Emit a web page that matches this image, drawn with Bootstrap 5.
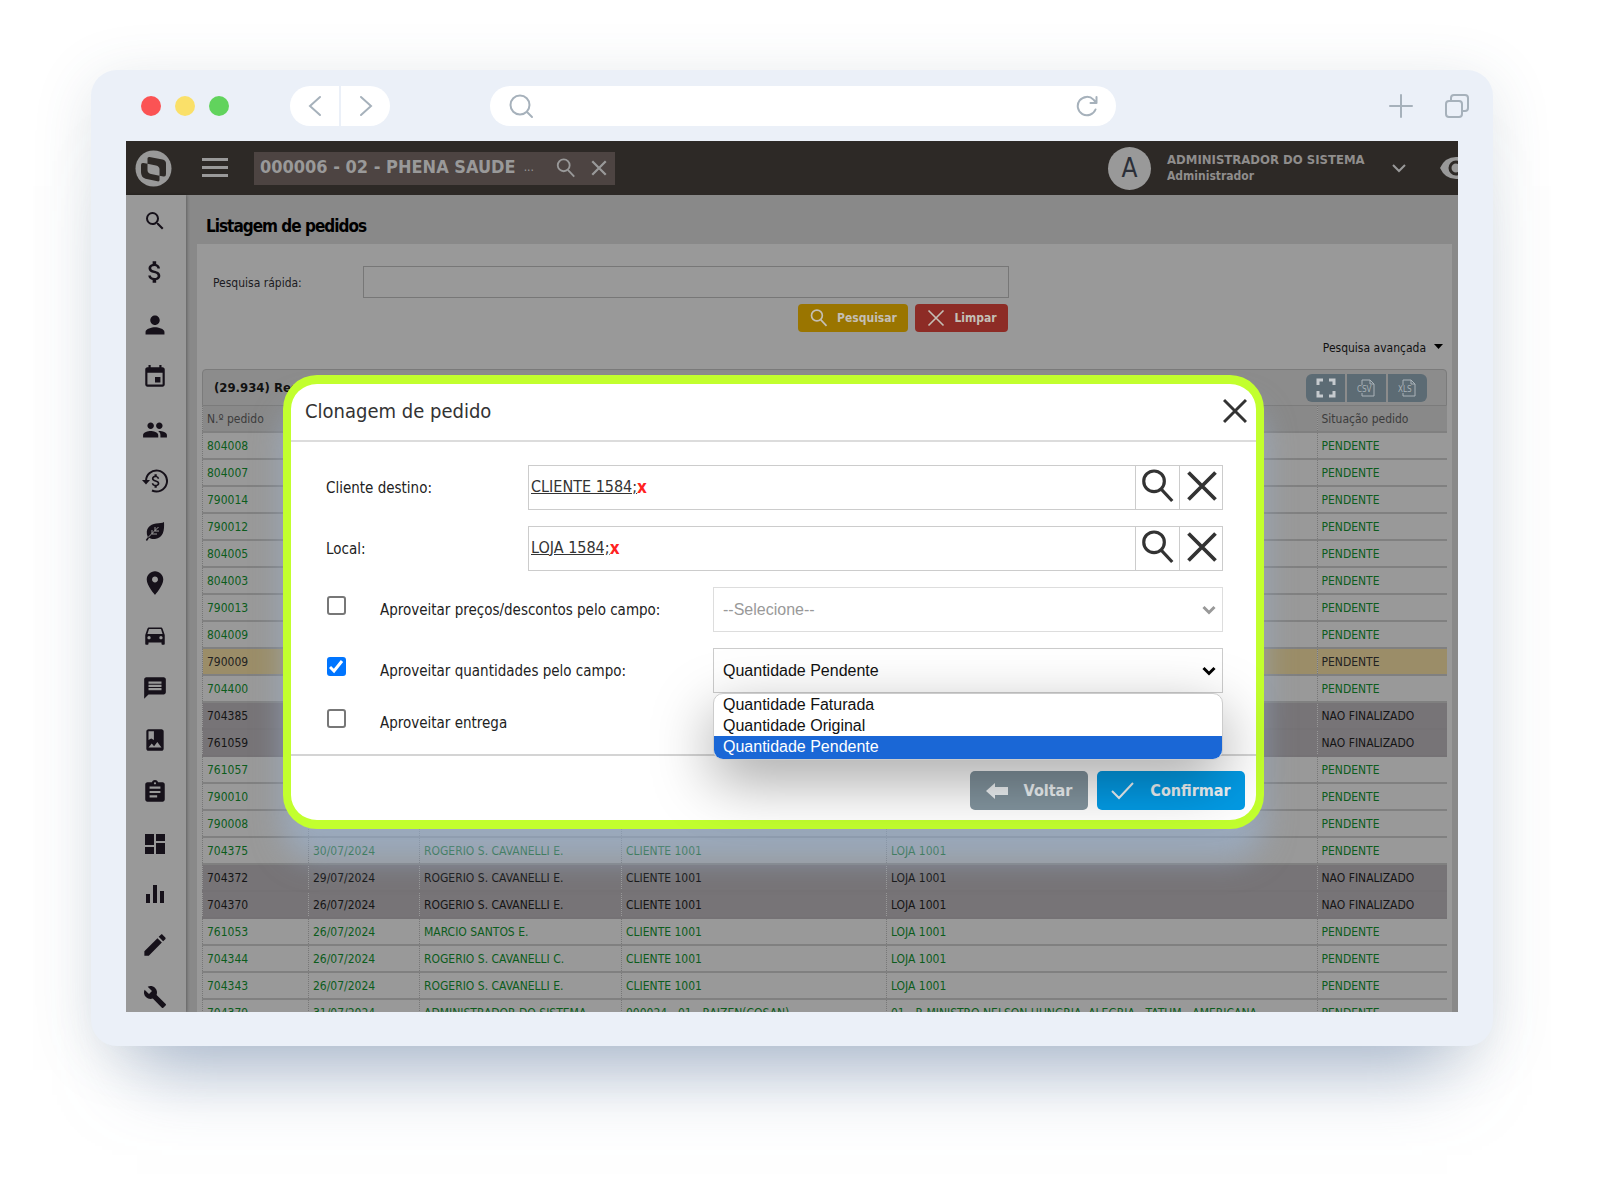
<!DOCTYPE html>
<html lang="pt-BR">
<head>
<meta charset="utf-8">
<meta name="viewport" content="width=device-width, initial-scale=1">
<title>Listagem de pedidos</title>
<link href="https://cdn.jsdelivr.net/npm/bootstrap@5.3.0/dist/css/bootstrap.min.css" rel="stylesheet">
<style>
:root{--ui:"DejaVu Sans Condensed","DejaVu Sans",sans-serif;--ink:#16111a;}
body{background:#fff;font-family:var(--ui);font-size:12px;line-height:16px;color:#111;height:100vh;padding:70px 107px 140px 91px;overflow:hidden}
svg{display:block;flex:none}
button{font-family:inherit}
.window{min-height:0;background:#ebf0f8;border-radius:26px;padding-bottom:34px;box-shadow:0 70px 70px -46px rgba(130,152,182,.62),0 10px 60px rgba(60,85,105,.15)}
.chrome{height:71px;padding:0 24px 0 50px;color:#a6b1bb}
.lamps{gap:14px}
.lamp{width:20px;height:20px;border-radius:50%}
.lamp-red{background:#fb5354}
.lamp-yellow{background:#fae069}
.lamp-green{background:#61d35d}
.nav-pill{margin-left:61px;gap:2px}
.nav-pill button{width:49px;height:40px;background:#fff;border:0;color:inherit}
.nav-pill button:first-child{border-radius:20px 0 0 20px}
.nav-pill button:last-child{border-radius:0 20px 20px 0}
.address{height:40px;border-radius:20px;background:#fff;margin:0 273px 0 100px;padding:0 18px}
.address input{border:0;outline:0;background:none}
.chrome-end{gap:32px}
.bare{background:none;border:0;padding:0;color:inherit}
.screen{background:#898989;margin:0 35px}
.topbar{height:54px;background:#2d2926;color:#999;padding-left:9px;overflow:hidden}
.burger{margin-left:30px}
.tenant{background:#4d4442;width:361px;height:33px;padding:0 7px 0 6px;margin-left:26px;gap:13px}
.tenant-label{padding-bottom:3px}
.tenant-name{font-size:18px;line-height:24px;font-weight:700}
.tenant-more{font-size:12px}
.avatar{width:43px;height:43px;border-radius:50%;background:#999;color:#2b2f38;font-size:26px}
.who{width:204px;font-size:13px;font-weight:700;line-height:16px;margin:0 21px 0 16px;color:#8f8d8c;white-space:nowrap}
.who small{font-size:12px;font-weight:700}
.eye{width:18px;overflow:hidden;margin-left:34px}
.work{min-height:0}
.side{width:60px;background:#999;padding:14px 3px 3px 0;color:var(--ink);box-shadow:1px 0 3px rgba(0,0,0,.3);overflow:hidden}
.side svg{fill:currentColor}
.main-area{padding:0 6px 0 11px;min-width:0}
.page-title{font-size:17px;line-height:24px;font-weight:700;letter-spacing:-1px;color:#000;margin:0;padding:19px 0 6px 9px}
.panel{background:#999;padding:22px 5px 0;overflow:hidden}
.quick{padding-left:11px}
.quick label{width:150px;padding-top:2px;color:#1b1b22}
.quick input{width:646px;height:32px;background:#999;border:1px solid #777;border-radius:0}
.tools{width:806px;margin-top:6px;gap:7px}
.tool{height:28px;border-radius:4px;font-size:12px;font-weight:700;color:#c4bfb5;border:0}
.yellow{background:#9a7500;width:110px}
.red{background:#8d2c26;width:93px}
.advanced{padding:8px 4px 0 0;margin-bottom:13px}
.grid-head{height:37px;border:1px solid #7b7b7b;border-radius:4px 4px 0 0;background:#8c8c8c;padding:0 19px 0 11px;font-size:13px}
.export{gap:2px}
.export button{width:39px;height:28px;border:0;background:#5c6b74;color:#aab3b8;padding:0}
.orders{table-layout:fixed;width:100%;margin:0;color:#0c5c1c;white-space:nowrap}
.orders th{font-weight:400;color:#3c3c3c;background:#898989;height:26px}
.orders th,.orders td{padding:0 4px;vertical-align:middle;border-left:1px dotted #777;border-bottom:2px solid #808080;overflow:hidden}
.orders td{height:27px}
.orders .draft td{background:#777477;color:#151515;border-color:#757275}
.orders .picked td{background:#9b8d68;color:#222}
.layer{inset:0;padding:234px 194px 0 157px;pointer-events:none}
.dialog{pointer-events:auto;background:#fff;border:8px solid #c2ff2e;border-top-width:9px;border-bottom-width:9px;border-radius:34px;box-shadow:0 30px 30px 0 rgba(155,180,212,.6);color:#222;font-size:15px;line-height:20px}
.dialog-head{height:58px;border-bottom:2px solid #dcdcdc;padding:0 9px 2px 14px}
.dialog-head h2{font-size:20px;line-height:28px;margin:0;font-weight:400;color:#333}
.fields{padding:23px 33px 18px 35px;gap:16px}
.field-name{width:202px}
.picker{height:45px;border:1px solid #ccc}
.picker .val{border-right:1px solid #ccc;padding:0 0 2px 2px;font-size:16px}
.picker .val a{color:#333;text-decoration:underline}
.picker .val button{color:#f22;font-weight:700;font-size:17px}
.picker>button{width:43px;height:43px;padding:0 0 3px 1px;display:flex;justify-content:center}
.picker>button+button{border-left:1px solid #ccc}
.line{height:45px}
.line-last{height:27px}
.line label{width:333px;flex:none}
.line .form-check-input{width:19px;height:19px;margin:0 34px 8px 1px;border:2px solid #777;border-radius:3px;flex:none}
.line .form-check-input:checked{background-color:#0075ff;border-color:#0075ff;background-size:19px 19px;background-image:url("data:image/svg+xml,%3Csvg xmlns='http://www.w3.org/2000/svg' viewBox='0 0 19 19'%3E%3Cpath d='M3 10l4 4L15 4' fill='none' stroke='%23fff' stroke-width='3'/%3E%3C/svg%3E")}
.line select{font-family:"Liberation Sans",sans-serif;font-size:16px;height:45px;border:1px solid #ccc;border-radius:0;background-color:#fff;color:#111;padding:0 10px 0 9px;background-size:14px 10px;background-position:right 6px center;background-image:url("data:image/svg+xml,%3Csvg xmlns='http://www.w3.org/2000/svg' viewBox='0 0 14 10'%3E%3Cpath d='M1.5 2l5.500 5.500L12.500 2' fill='none' stroke='%23000' stroke-width='3'/%3E%3C/svg%3E")}
.line select:disabled{color:#999;opacity:1;border-color:#ddd;background-color:#fff;background-image:url("data:image/svg+xml,%3Csvg xmlns='http://www.w3.org/2000/svg' viewBox='0 0 14 10'%3E%3Cpath d='M1.5 2l5.500 5.500L12.500 2' fill='none' stroke='%23999' stroke-width='3'/%3E%3C/svg%3E")}
.menu{top:45px;left:0;right:0;z-index:2;list-style:none;margin:0;padding:0;background:#fff;border:1px solid #ccc;border-radius:10px;overflow:hidden;font:16px/21px "Liberation Sans",sans-serif;color:#111;box-shadow:0 20px 60px rgba(0,0,0,.36)}
.menu li{padding:0 9px}
.menu .on{background:#1a67d6;color:#fff;padding-bottom:2px}
.dialog-foot{border-top:2px solid #d4d4d4;padding:15px 11px 9px;gap:9px;height:66px}
.dialog-foot button{height:39px;border:0;border-radius:5px;font-size:16px;font-weight:700;color:#f0f4f6;white-space:nowrap}
.back{background:#82949e;width:118px}
.ok{background:#039be5;width:148px}
</style>
<script src="https://cdn.jsdelivr.net/npm/bootstrap@5.3.0/dist/js/bootstrap.bundle.min.js"></script>
</head>
<body class="d-flex flex-column">
<svg width="0" height="0" class="position-absolute" aria-hidden="true">
  <symbol id="lens" viewBox="0 0 24 24"><circle cx="9.500" cy="9" r="6.500"/><path d="M14 14l7 7.500"/></symbol>
  <symbol id="cross" viewBox="0 0 24 24"><path d="M3 3l18 18M21 3L3 21"/></symbol>
</svg>
<div class="window d-flex flex-column flex-grow-1">
  <div class="chrome d-flex align-items-center flex-shrink-0">
    <div class="lamps d-flex"><span class="lamp lamp-red"></span><span class="lamp lamp-yellow"></span><span class="lamp lamp-green"></span></div>
    <div class="nav-pill d-flex">
      <button type="button" class="d-flex align-items-center justify-content-center" aria-label="Voltar página"><svg width="14" height="22" fill="none" stroke="currentColor" stroke-width="2" stroke-linecap="round"><path d="M12 2L2 11l10 9"/></svg></button>
      <button type="button" class="d-flex align-items-center justify-content-center" aria-label="Avançar página"><svg width="14" height="22" fill="none" stroke="currentColor" stroke-width="2" stroke-linecap="round"><path d="M2 2l10 9-10 9"/></svg></button>
    </div>
    <div class="address d-flex align-items-center flex-grow-1">
      <svg width="26" height="26" fill="none" stroke="currentColor" stroke-width="2" stroke-linecap="round"><circle cx="12" cy="12" r="9.500"/><path d="M19 19l5 5"/></svg>
      <input class="flex-grow-1" type="text" aria-label="Endereço">
      <button type="button" class="bare" aria-label="Recarregar"><svg width="22" height="22" fill="none" stroke="currentColor" stroke-width="2" stroke-linecap="round" stroke-linejoin="round"><path d="M19.500 14.500A9.200 9.200 0 1 1 17.500 4.600L20 7.500M20.500 2v6h-6"/></svg></button>
    </div>
    <div class="chrome-end d-flex">
      <button type="button" class="bare" aria-label="Nova aba"><svg width="24" height="24" stroke="currentColor" stroke-width="2" stroke-linecap="round"><path d="M12 1v22M1 12h22"/></svg></button>
      <button type="button" class="bare" aria-label="Abas"><svg width="24" height="24" fill="none" stroke="currentColor" stroke-width="2"><rect x="1" y="7" width="16" height="16" rx="3"/><path d="M6 7V4a3 3 0 0 1 3-3h11a3 3 0 0 1 3 3v10a3 3 0 0 1-3 3h-3"/></svg></button>
    </div>
  </div>

  <div class="screen d-flex flex-column flex-grow-1 position-relative overflow-hidden">
    <header class="topbar d-flex align-items-center flex-shrink-0">
      <svg width="37" height="37" viewBox="0 0 37 37"><circle cx="18.500" cy="18.500" r="18" fill="#999"/><path d="M6 15q0-2.500 2.500-2l4 .8V8.500q0-1.800 2-1.500l13 2.600q3.500.8 3.500 4V24q0 3-2.500 2.500l-4-.8v4.300q0 1.700-2 1.300l-12-2.600Q6 27.500 6 22z" fill="#2d2926"/><path d="M12.500 13.800l8.500 1.700q3.500.8 3.500 4v6.200l-8.500-1.800q-3.500-.8-3.500-4z" fill="#999"/></svg>
      <button type="button" class="bare burger" aria-label="Menu"><svg width="26" height="20" fill="#999"><path d="M0 0h26v3H0zM0 8h26v3H0zM0 16h26v3H0z"/></svg></button>
      <div class="tenant d-flex align-items-center"><div class="tenant-label me-auto text-nowrap d-flex align-items-center gap-2"><span class="tenant-name">000006 - 02 - PHENA SAUDE</span><span class="tenant-more">...</span></div>
        <svg width="22" height="22" fill="none" stroke="currentColor" stroke-width="2"><use href="#lens"/></svg>
        <svg width="18" height="18" stroke="currentColor" stroke-width="3"><use href="#cross"/></svg>
      </div>
      <div class="avatar d-flex align-items-center justify-content-center ms-auto">A</div>
      <div class="who">ADMINISTRADOR DO SISTEMA<br><small>Administrador</small></div>
      <svg width="14" height="9" fill="none" stroke="currentColor" stroke-width="2"><path d="M1 1l6 6 6-6"/></svg>
      <div class="eye"><svg width="34" height="22" fill="none"><path d="M0 11Q5 0 16 0t16 11Q27 22 16 22T0 11z" fill="#999"/><circle cx="16" cy="11" r="6" stroke="#2d2926" stroke-width="3"/></svg></div>
    </header>

    <div class="work d-flex flex-grow-1">
      <nav class="side d-flex flex-column align-items-center justify-content-between flex-shrink-0" aria-label="Módulos">
        <svg width="24" height="24"><path d="M15.500 14h-.79l-.28-.27A6.471 6.471 0 0 0 16 9.500 6.500 6.500 0 1 0 9.500 16c1.610 0 3.090-.59 4.230-1.570l.27.28v.79l5 4.990L20.490 19l-4.990-5zm-6 0C7.010 14 5 11.990 5 9.500S7.010 5 9.500 5 14 7.010 14 9.500 11.990 14 9.500 14z"/></svg>
        <svg width="26" height="26" viewBox="1 1 22 22"><path d="M11.800 10.900c-2.270-.59-3-1.200-3-2.150 0-1.090 1.010-1.850 2.700-1.850 1.780 0 2.440.85 2.500 2.100h2.210c-.07-1.720-1.120-3.300-3.210-3.810V3h-3v2.160c-1.940.42-3.500 1.680-3.500 3.610 0 2.310 1.910 3.460 4.700 4.130 2.500.6 3 1.480 3 2.410 0 .69-.49 1.790-2.700 1.790-2.060 0-2.870-.92-2.980-2.100h-2.200c.12 2.190 1.760 3.420 3.680 3.830V21h3v-2.150c1.950-.37 3.500-1.500 3.500-3.550 0-2.840-2.430-3.810-4.700-4.400z"/></svg>
        <svg width="26" height="26" viewBox="1 1 22 22"><path d="M12 12c2.210 0 4-1.790 4-4s-1.790-4-4-4-4 1.790-4 4 1.790 4 4 4zm0 2c-2.670 0-8 1.340-8 4v2h16v-2c0-2.660-5.330-4-8-4z"/></svg>
        <svg width="26" height="26" viewBox="0 0 24 24"><path d="M17 12h-5v5h5v-5zM16 1v2H8V1H6v2H5c-1.110 0-1.990.9-1.990 2L3 19c0 1.100.89 2 2 2h14c1.100 0 2-.9 2-2V5c0-1.100-.9-2-2-2h-1V1h-2zm3 18H5V8h14v11z"/></svg>
        <svg width="26" height="26" viewBox="0 0 24 24"><path d="M16 11c1.660 0 2.990-1.340 2.990-3S17.660 5 16 5c-1.660 0-3 1.340-3 3s1.340 3 3 3zm-8 0c1.660 0 2.990-1.340 2.990-3S9.660 5 8 5C6.340 5 5 6.340 5 8s1.340 3 3 3zm0 2c-2.330 0-7 1.170-7 3.500V19h14v-2.500c0-2.330-4.670-3.500-7-3.500zm8 0c-.29 0-.62.02-.97.05 1.160.84 1.970 1.970 1.970 3.450V19h6v-2.500c0-2.330-4.670-3.500-7-3.500z"/></svg>
        <svg width="26" height="24" viewBox="0 0 26 24"><path d="M4 12A10.500 10.500 0 1 1 10 21.500" fill="none" stroke="currentColor" stroke-width="2"/><path d="M0 11h8l-4 4.500z"/><path transform="translate(5 3) scale(.75)" d="M11.800 10.900c-2.270-.59-3-1.200-3-2.150 0-1.090 1.010-1.850 2.700-1.850 1.780 0 2.440.85 2.500 2.100h2.210c-.07-1.720-1.120-3.300-3.210-3.810V3h-3v2.160c-1.940.42-3.500 1.680-3.500 3.610 0 2.310 1.910 3.460 4.700 4.130 2.500.6 3 1.480 3 2.410 0 .69-.49 1.790-2.700 1.790-2.060 0-2.870-.92-2.980-2.100h-2.200c.12 2.190 1.760 3.420 3.680 3.830V21h3v-2.150c1.950-.37 3.500-1.500 3.500-3.550 0-2.840-2.430-3.810-4.700-4.400z"/></svg>
        <svg width="24" height="24"><path d="M21 3c.5 8-.5 16-9 17-2.500.3-4.500-.3-5.800-1.200L4 22l-1.200-1 2-3C1.500 10 7 5 13 4.500 17 4.300 19 4 21 3z"/><path d="M5 18.500L15.500 8M9 15v-4M9 15h5M12 12V8M12 12h4" stroke="#999" fill="none"/></svg>
        <svg width="26" height="26" viewBox="1 1 22 22"><path d="M12 2C8.130 2 5 5.130 5 9c0 5.250 7 13 7 13s7-7.750 7-13c0-3.870-3.130-7-7-7zm0 9.500c-1.380 0-2.500-1.120-2.500-2.500s1.120-2.500 2.500-2.500 2.500 1.120 2.500 2.500-1.120 2.500-2.500 2.500z"/></svg>
        <svg width="26" height="26" viewBox="0 0 24 24"><path d="M18.920 6.010C18.720 5.420 18.160 5 17.500 5h-11c-.66 0-1.210.42-1.420 1.010L3 12v8c0 .55.45 1 1 1h1c.55 0 1-.45 1-1v-1h12v1c0 .55.45 1 1 1h1c.55 0 1-.45 1-1v-8l-2.080-5.990zM6.500 16c-.83 0-1.500-.67-1.500-1.500S5.670 13 6.500 13s1.500.67 1.500 1.500S7.330 16 6.500 16zm11 0c-.83 0-1.500-.67-1.500-1.500s.67-1.500 1.500-1.500 1.500.67 1.500 1.500-.67 1.500-1.500 1.500zM5 11l1.500-4.500h11L19 11H5z"/></svg>
        <svg width="26" height="26" viewBox="0 0 24 24"><path d="M20 2H4c-1.100 0-1.990.9-1.990 2L2 22l4-4h14c1.100 0 2-.9 2-2V4c0-1.100-.9-2-2-2zM6 9h12v2H6V9zm12 5H6v-2h12v2zm0-6H6V6h12v2z"/></svg>
        <svg width="26" height="26" viewBox="0 0 24 24"><path d="M18 2H6c-1.100 0-2 .9-2 2v16c0 1.100.9 2 2 2h12c1.100 0 2-.9 2-2V4c0-1.100-.9-2-2-2zM6 4h5v8l-2.500-1.500L6 12V4zm0 15l3-3.860 2.140 2.580 3-3.860L18 19H6z"/></svg>
        <svg width="26" height="26" viewBox="0 0 24 24"><path d="M19 3h-4.180C14.400 1.840 13.300 1 12 1c-1.300 0-2.400.84-2.820 2H5c-1.100 0-2 .9-2 2v14c0 1.100.9 2 2 2h14c1.100 0 2-.9 2-2V5c0-1.100-.9-2-2-2zm-7 0c.55 0 1 .45 1 1s-.45 1-1 1-1-.45-1-1 .45-1 1-1zm2 14H7v-2h7v2zm3-4H7v-2h10v2zm0-4H7V7h10v2z"/></svg>
        <svg width="24" height="24"><path d="M2 13h9V2H2v11zm0 9h9v-7H2v7zm11 0h9V11h-9v11zm0-20v7h9V2h-9z"/></svg>
        <svg width="24" height="24"><path d="M3 12h4v9H3zM10 3h4v18h-4zM17 9h4v12h-4z"/></svg>
        <svg width="26" height="26" viewBox="1 1 22 22"><path d="M3 17.250V21h3.750L17.810 9.940l-3.750-3.750L3 17.250zM20.710 7.040c.39-.39.39-1.020 0-1.410l-2.340-2.340c-.39-.39-1.020-.39-1.410 0l-1.830 1.830 3.750 3.750 1.830-1.830z"/></svg>
        <svg width="24" height="24"><path d="M22.700 19l-9.100-9.100c.9-2.300.4-5-1.500-6.900-2-2-5-2.400-7.400-1.300L9 6 6 9 1.600 4.700C.4 7.100.9 10.100 2.900 12.100c1.900 1.900 4.600 2.400 6.900 1.500l9.100 9.100c.4.4 1 .4 1.400 0l2.300-2.300c.5-.4.5-1.100.1-1.400z"/></svg>
      </nav>

      <main class="main-area d-flex flex-column flex-grow-1">
        <h1 class="page-title">Listagem de pedidos</h1>
        <section class="panel flex-grow-1">
          <div class="quick d-flex align-items-center"><label for="quick">Pesquisa rápida:</label><input id="quick" type="text" class="form-control"></div>
          <div class="tools d-flex justify-content-end">
            <button type="button" class="tool yellow d-flex align-items-center justify-content-center gap-2"><svg width="20" height="20" viewBox="0 0 24 24" fill="none" stroke="currentColor" stroke-width="2"><use href="#lens"/></svg>Pesquisar</button>
            <button type="button" class="tool red d-flex align-items-center justify-content-center gap-2"><svg width="20" height="20" viewBox="0 0 24 24" stroke="currentColor" stroke-width="2"><use href="#cross"/></svg>Limpar</button>
          </div>
          <div class="advanced d-flex justify-content-end"><button type="button" class="bare d-flex gap-2">Pesquisa avançada <svg width="9" height="6" class="mt-1"><path d="M0 0h9L4.500 5z"/></svg></button></div>
          <div class="grid-head d-flex align-items-center justify-content-between"><strong>(29.934) Registros</strong>
            <div class="export d-flex">
              <button type="button" aria-label="Tela cheia" class="d-flex align-items-center justify-content-center rounded-start"><svg width="20" height="20" fill="none" stroke="#c5cace" stroke-width="3"><path d="M2 7V2h5M13 2h5v5M18 13v5h-5M7 18H2v-5"/></svg></button>
              <button type="button" aria-label="Exportar CSV" class="d-flex align-items-center justify-content-center"><svg width="20" height="20" fill="none" stroke="currentColor"><path d="M5 7V2h8l4 4v12H5v-3M13 2v4h4"/><text x="0" y="14" font-size="8" fill="currentColor" stroke="none">CSV</text></svg></button>
              <button type="button" aria-label="Exportar XLS" class="d-flex align-items-center justify-content-center rounded-end"><svg width="20" height="20" fill="none" stroke="currentColor"><path d="M5 7V2h8l4 4v12H5v-3M13 2v4h4"/><text x="0" y="14" font-size="8" fill="currentColor" stroke="none">XLS</text></svg></button>
            </div>
          </div>
          <table class="orders">
            <colgroup><col style="width:106px"><col style="width:111px"><col style="width:202px"><col style="width:265px"><col><col style="width:130px"></colgroup>
            <thead><tr><th>N.º pedido</th><th></th><th></th><th></th><th></th><th>Situação pedido</th></tr></thead>
            <tbody>
            <tr><td>804008</td><td></td><td></td><td></td><td></td><td>PENDENTE</td></tr>
            <tr><td>804007</td><td></td><td></td><td></td><td></td><td>PENDENTE</td></tr>
            <tr><td>790014</td><td></td><td></td><td></td><td></td><td>PENDENTE</td></tr>
            <tr><td>790012</td><td></td><td></td><td></td><td></td><td>PENDENTE</td></tr>
            <tr><td>804005</td><td></td><td></td><td></td><td></td><td>PENDENTE</td></tr>
            <tr><td>804003</td><td></td><td></td><td></td><td></td><td>PENDENTE</td></tr>
            <tr><td>790013</td><td></td><td></td><td></td><td></td><td>PENDENTE</td></tr>
            <tr><td>804009</td><td></td><td></td><td></td><td></td><td>PENDENTE</td></tr>
            <tr class="picked"><td>790009</td><td></td><td></td><td></td><td></td><td>PENDENTE</td></tr>
            <tr><td>704400</td><td></td><td></td><td></td><td></td><td>PENDENTE</td></tr>
            <tr class="draft"><td>704385</td><td></td><td></td><td></td><td></td><td>NAO FINALIZADO</td></tr>
            <tr class="draft"><td>761059</td><td></td><td></td><td></td><td></td><td>NAO FINALIZADO</td></tr>
            <tr><td>761057</td><td></td><td></td><td></td><td></td><td>PENDENTE</td></tr>
            <tr><td>790010</td><td></td><td></td><td></td><td></td><td>PENDENTE</td></tr>
            <tr><td>790008</td><td></td><td></td><td></td><td></td><td>PENDENTE</td></tr>
            <tr><td>704375</td><td>30/07/2024</td><td>ROGERIO S. CAVANELLI E.</td><td>CLIENTE 1001</td><td>LOJA 1001</td><td>PENDENTE</td></tr>
            <tr class="draft"><td>704372</td><td>29/07/2024</td><td>ROGERIO S. CAVANELLI E.</td><td>CLIENTE 1001</td><td>LOJA 1001</td><td>NAO FINALIZADO</td></tr>
            <tr class="draft"><td>704370</td><td>26/07/2024</td><td>ROGERIO S. CAVANELLI E.</td><td>CLIENTE 1001</td><td>LOJA 1001</td><td>NAO FINALIZADO</td></tr>
            <tr><td>761053</td><td>26/07/2024</td><td>MARCIO SANTOS E.</td><td>CLIENTE 1001</td><td>LOJA 1001</td><td>PENDENTE</td></tr>
            <tr><td>704344</td><td>26/07/2024</td><td>ROGERIO S. CAVANELLI C.</td><td>CLIENTE 1001</td><td>LOJA 1001</td><td>PENDENTE</td></tr>
            <tr><td>704343</td><td>26/07/2024</td><td>ROGERIO S. CAVANELLI E.</td><td>CLIENTE 1001</td><td>LOJA 1001</td><td>PENDENTE</td></tr>
            <tr><td>704379</td><td>31/07/2024</td><td>ADMINISTRADOR DO SISTEMA</td><td>000024 - 01 - RAIZEN(COSAN)</td><td>01 - R MINISTRO NELSON HUNGRIA, ALEGRIA - TATUM - AMERICANA</td><td>PENDENTE</td></tr>
            </tbody>
          </table>
        </section>
      </main>
    </div>

    <div class="layer position-absolute">
      <div class="dialog" role="dialog" aria-labelledby="dlg-title">
        <div class="dialog-head d-flex align-items-center justify-content-between">
          <h2 id="dlg-title">Clonagem de pedido</h2>
          <button type="button" class="bare" aria-label="Fechar"><svg width="24" height="26" viewBox="0 0 24 26" stroke="#333" stroke-width="3"><path d="M1 2l22 22M23 2L1 24"/></svg></button>
        </div>
        <div class="fields d-flex flex-column">
          <div class="d-flex align-items-center"><span class="field-name">Cliente destino:</span>
            <div class="picker d-flex flex-grow-1"><div class="val d-flex align-items-center flex-grow-1"><a href="#">CLIENTE 1584;</a><button type="button" class="bare">x</button></div>
              <button type="button" class="bare align-items-center" aria-label="Buscar cliente"><svg width="38" height="38" viewBox="0 0 24 24" fill="none" stroke="#333" stroke-width="2"><use href="#lens"/></svg></button>
              <button type="button" class="bare align-items-center" aria-label="Limpar cliente"><svg width="36" height="36" viewBox="0 0 24 24" stroke="#333" stroke-width="2.500"><use href="#cross"/></svg></button></div></div>
          <div class="d-flex align-items-center"><span class="field-name">Local:</span>
            <div class="picker d-flex flex-grow-1"><div class="val d-flex align-items-center flex-grow-1"><a href="#">LOJA 1584;</a><button type="button" class="bare">x</button></div>
              <button type="button" class="bare align-items-center" aria-label="Buscar local"><svg width="38" height="38" viewBox="0 0 24 24" fill="none" stroke="#333" stroke-width="2"><use href="#lens"/></svg></button>
              <button type="button" class="bare align-items-center" aria-label="Limpar local"><svg width="36" height="36" viewBox="0 0 24 24" stroke="#333" stroke-width="2.500"><use href="#cross"/></svg></button></div></div>
          <div class="line d-flex align-items-center"><input class="form-check-input" type="checkbox" id="c1"><label for="c1">Aproveitar preços/descontos pelo campo:</label>
            <select class="form-select" disabled aria-label="Campo de preços"><option>--Selecione--</option></select></div>
          <div class="line d-flex align-items-center"><input class="form-check-input" type="checkbox" id="c2" checked><label for="c2">Aproveitar quantidades pelo campo:</label>
            <div class="position-relative flex-grow-1"><select class="form-select" aria-label="Campo de quantidades"><option>Quantidade Pendente</option></select>
              <ul class="menu position-absolute" role="listbox" aria-label="Opções"><li role="option">Quantidade Faturada</li><li role="option">Quantidade Original</li><li role="option" class="on" aria-selected="true">Quantidade Pendente</li></ul></div></div>
          <div class="line line-last d-flex align-items-center"><input class="form-check-input" type="checkbox" id="c3"><label for="c3">Aproveitar entrega</label></div>
        </div>
        <div class="dialog-foot d-flex justify-content-end">
          <button type="button" class="back d-flex align-items-center justify-content-center gap-3"><svg width="22" height="16" fill="currentColor"><path d="M0 8l9-8v4h13v8H9v4z"/></svg>Voltar</button>
          <button type="button" class="ok d-flex align-items-center justify-content-center gap-3"><svg width="23" height="18" fill="none" stroke="currentColor" stroke-width="2"><path d="M1 9l7 7L22 1"/></svg>Confirmar</button>
        </div>
      </div>
    </div>
  </div>
</div>
</body>
</html>
